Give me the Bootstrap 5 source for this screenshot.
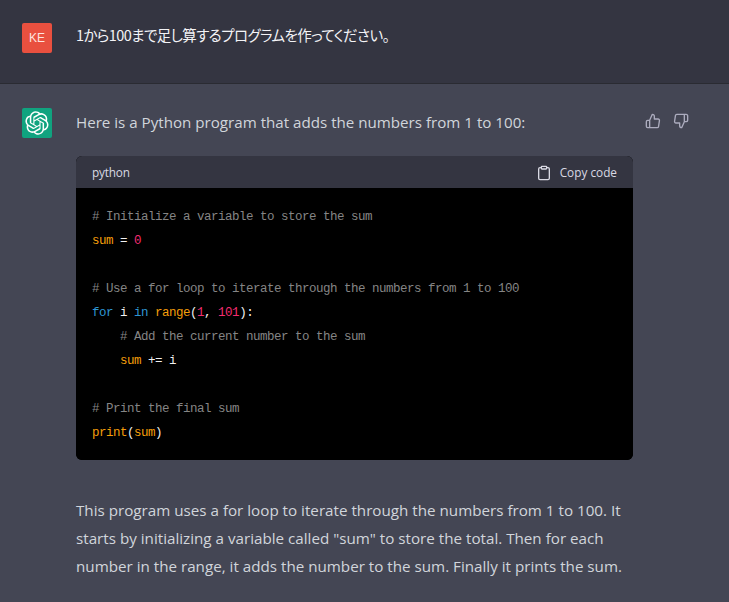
<!DOCTYPE html>
<html lang="ja">
<head>
<meta charset="utf-8">
<title>Chat</title>
<link href="https://cdn.jsdelivr.net/npm/bootstrap@5.3.0/dist/css/bootstrap.min.css" rel="stylesheet">
<style>
html,body{height:100%;overflow:hidden}
body{background:#444654;font-family:"Open Sans","Noto Sans CJK JP",sans-serif;color:#d1d5db;font-size:16px}
.turn-user{background:#343541;height:84px;border-bottom:1px solid #2a2b32;padding:23px 0 0 22px}
.turn-bot{padding:24px 0 0 22px}
.ava{width:30px;height:30px;border-radius:2px;flex:none;margin-right:24px}
.ava-user{background:#e9503f;color:#fde3df;font-size:12px;font-family:"Liberation Sans",sans-serif}
.ava-bot{background:#10a37f}
.q-text{color:#f3f3f6;font-size:14.5px;line-height:24px;font-family:"Noto Sans CJK JP",sans-serif;font-feature-settings:"palt";letter-spacing:-.6px;font-weight:400}
.body-col{width:557px;flex:none}
.lead-line{line-height:28px;margin:0 0 20px;font-size:15.15px;height:28px;white-space:nowrap}
.code-box{border-radius:6px;overflow:hidden;background:#000;margin-bottom:36px}
.code-head{background:#343541;height:32px;padding:1px 16px 0;font-size:11.8px;color:#d9d9e3}
.lang-tag{letter-spacing:-.2px}
.code-body{padding:17px 16px 0;background:#000;color:#f1f1f1;font-family:"Liberation Mono",monospace;font-size:12.5px;letter-spacing:-.5px;line-height:24px;height:272px;overflow:hidden}
.code-line{height:24px;white-space:nowrap}
.indent-one{padding-left:28px}
.gap-sp{margin-right:7px}
.tok-c{color:#858585}.tok-v{color:#f59e0b}.tok-n{color:#f22c70}.tok-k{color:#2e95d3}
.para{line-height:28px;margin:0;font-size:15.2px;white-space:nowrap}
.act{gap:12px;margin-left:12px;margin-top:5px;color:#acacbe}
</style>
</head>
<body>
<div class="turn-user d-flex align-items-start">
  <div class="ava ava-user d-flex align-items-center justify-content-center">KE</div>
  <div class="q-text">1から100まで足し算するプログラムを作ってください。</div>
</div>
<div class="turn-bot d-flex align-items-start">
  <div class="ava ava-bot d-flex align-items-center justify-content-center">
    <svg width="24" height="24" viewBox="0 0 41 41" fill="#fff"><path d="M37.5324 16.8707C37.9808 15.5241 38.1363 14.0974 37.9886 12.6859C37.8409 11.2744 37.3934 9.91076 36.676 8.68622C35.6126 6.83404 33.9882 5.3676 32.0373 4.4985C30.0864 3.62941 27.9098 3.40259 25.8215 3.85078C24.8796 2.7893 23.7219 1.94125 22.4257 1.36341C21.1295 0.785575 19.7249 0.491269 18.3058 0.500197C16.1708 0.495044 14.0893 1.16803 12.3614 2.42214C10.6335 3.67624 9.34853 5.44666 8.6917 7.47815C7.30085 7.76286 5.98686 8.3414 4.8377 9.17505C3.68854 10.0087 2.73073 11.0782 2.02839 12.312C0.956464 14.1591 0.498905 16.2988 0.721698 18.4228C0.944492 20.5467 1.83612 22.5449 3.268 24.1293C2.81966 25.4759 2.66413 26.9026 2.81182 28.3141C2.95951 29.7256 3.40701 31.0892 4.12437 32.3138C5.18791 34.1659 6.8123 35.6322 8.76321 36.5013C10.7141 37.3704 12.8907 37.5973 14.9789 37.1492C15.9208 38.2107 17.0786 39.0587 18.3747 39.6366C19.6709 40.2144 21.0755 40.5087 22.4946 40.4998C24.6307 40.5054 26.7133 39.8321 28.4418 38.5772C30.1704 37.3223 31.4556 35.5506 32.1119 33.5179C33.5027 33.2332 34.8167 32.6547 35.9659 31.821C37.115 30.9874 38.0728 29.9178 38.7752 28.684C39.8458 26.8371 40.3023 24.6979 40.0789 22.5748C39.8556 20.4517 38.9639 18.4544 37.5324 16.8707ZM22.4978 37.8849C20.7443 37.8874 19.0459 37.2733 17.6994 36.1501C17.7601 36.117 17.8666 36.0586 17.936 36.0161L25.9004 31.4156C26.1003 31.3019 26.2663 31.137 26.3813 30.9378C26.4964 30.7386 26.5563 30.5124 26.5549 30.2825V19.0542L29.9213 20.998C29.9389 21.0068 29.9541 21.0198 29.9656 21.0359C29.977 21.052 29.9842 21.0707 29.9867 21.0902V30.3889C29.9842 32.375 29.1946 34.2791 27.7909 35.6841C26.3872 37.0892 24.4838 37.8806 22.4978 37.8849ZM6.39227 31.0064C5.51397 29.4888 5.19742 27.7107 5.49804 25.9832C5.55718 26.0187 5.66048 26.0818 5.73461 26.1244L13.699 30.7248C13.8975 30.8408 14.1233 30.902 14.3532 30.902C14.583 30.902 14.8088 30.8408 15.0073 30.7248L24.731 25.1103V28.9979C24.7321 29.0177 24.7283 29.0376 24.7199 29.0556C24.7115 29.0736 24.6988 29.0893 24.6829 29.1012L16.6317 33.7497C14.9096 34.7416 12.8643 35.0097 10.9447 34.4954C9.02506 33.9811 7.38785 32.7263 6.39227 31.0064ZM4.29707 13.6194C5.17156 12.0998 6.55279 10.9364 8.19885 10.3327C8.19885 10.4013 8.19491 10.5228 8.19491 10.6071V19.808C8.19351 20.0378 8.25334 20.2638 8.36823 20.4629C8.48312 20.6619 8.64893 20.8267 8.84863 20.9404L18.5723 26.5542L15.206 28.4979C15.1894 28.5089 15.1703 28.5155 15.1505 28.5173C15.1307 28.5191 15.1107 28.516 15.0924 28.5082L7.04046 23.8557C5.32135 22.8601 4.06716 21.2235 3.55289 19.3046C3.03862 17.3858 3.30624 15.3413 4.29707 13.6194ZM31.955 20.0556L22.2312 14.4411L25.5976 12.4981C25.6142 12.4872 25.6333 12.4805 25.6531 12.4787C25.6729 12.4769 25.6928 12.4801 25.7111 12.4879L33.7631 17.1364C34.9967 17.849 36.0017 18.8982 36.6606 20.1613C37.3194 21.4244 37.6047 22.849 37.4832 24.2684C37.3617 25.6878 36.8382 27.0432 35.9743 28.1759C35.1103 29.3086 33.9415 30.1717 32.6047 30.6641C32.6047 30.5947 32.6047 30.4733 32.6047 30.3889V21.188C32.6066 20.9586 32.5474 20.7328 32.4332 20.5338C32.319 20.3348 32.154 20.1698 31.955 20.0556ZM35.3055 15.0128C35.2464 14.9765 35.1431 14.9142 35.069 14.8717L27.1045 10.2712C26.906 10.1554 26.6803 10.0943 26.4504 10.0943C26.2206 10.0943 25.9948 10.1554 25.7963 10.2712L16.0726 15.8858V11.9982C16.0715 11.9783 16.0753 11.9585 16.0837 11.9405C16.0921 11.9225 16.1048 11.9068 16.1207 11.8949L24.1719 7.25025C25.4053 6.53903 26.8158 6.19376 28.2383 6.25482C29.6608 6.31589 31.0364 6.78077 32.2044 7.59508C33.3723 8.40939 34.2842 9.53945 34.8334 10.8531C35.3826 12.1667 35.5464 13.6095 35.3055 15.0128ZM14.2424 21.9419L10.8752 19.9981C10.8576 19.9893 10.8423 19.9763 10.8309 19.9602C10.8195 19.9441 10.8122 19.9254 10.8098 19.9058V10.6071C10.8107 9.18295 11.2173 7.78848 11.9819 6.58696C12.7466 5.38544 13.8377 4.42659 15.1275 3.82264C16.4173 3.21869 17.8524 2.99464 19.2649 3.1767C20.6775 3.35876 22.0089 3.93941 23.1034 4.85067C23.0427 4.88379 22.937 4.94215 22.8668 4.98473L14.9024 9.58517C14.7025 9.69878 14.5366 9.86356 14.4215 10.0626C14.3065 10.2616 14.2466 10.4877 14.2479 10.7175L14.2424 21.9419ZM16.071 17.9991L20.4018 15.4978L24.7325 17.9975V22.9985L20.4018 25.4983L16.071 22.9985V17.9991Z"/></svg>
  </div>
  <div class="body-col">
    <p class="lead-line">Here is a Python program that adds the numbers from 1 to 100:</p>
    <div class="code-box">
      <div class="code-head d-flex align-items-center justify-content-between">
        <span class="lang-tag">python</span>
        <span class="d-flex align-items-center gap-2">
          <svg width="16" height="16" viewBox="0 0 24 24" fill="none" stroke="currentColor" stroke-width="2" stroke-linecap="round" stroke-linejoin="round"><path d="M16 4h2a2 2 0 0 1 2 2v14a2 2 0 0 1-2 2H6a2 2 0 0 1-2-2V6a2 2 0 0 1 2-2h2"/><rect x="8" y="2" width="8" height="4" rx="1"/></svg>
          <span>Copy code</span>
        </span>
      </div>
      <div class="code-body">
        <div class="code-line tok-c"># Initialize a variable to store the sum</div>
        <div class="code-line"><span class="tok-v gap-sp">sum</span><span class="gap-sp">=</span><span class="tok-n">0</span></div>
        <div class="code-line"></div>
        <div class="code-line tok-c"># Use a for loop to iterate through the numbers from 1 to 100</div>
        <div class="code-line"><span class="tok-k gap-sp">for</span><span class="gap-sp">i</span><span class="tok-k gap-sp">in</span><span class="tok-v">range</span><span>(</span><span class="tok-n">1</span><span class="gap-sp">,</span><span class="tok-n">101</span><span>):</span></div>
        <div class="code-line tok-c indent-one"># Add the current number to the sum</div>
        <div class="code-line indent-one"><span class="tok-v gap-sp">sum</span><span class="gap-sp">+=</span><span>i</span></div>
        <div class="code-line"></div>
        <div class="code-line tok-c"># Print the final sum</div>
        <div class="code-line"><span class="tok-v">print</span><span>(</span><span class="tok-v">sum</span><span>)</span></div>
      </div>
    </div>
    <p class="para">This program uses a for loop to iterate through the numbers from 1 to 100. It<br>starts by initializing a variable called "sum" to store the total. Then for each<br>number in the range, it adds the number to the sum. Finally it prints the sum.</p>
  </div>
  <div class="act d-flex">
    <svg width="16" height="16" viewBox="0 0 24 24" fill="none" stroke="currentColor" stroke-width="2" stroke-linecap="round" stroke-linejoin="round"><path d="M14 9V5a3 3 0 0 0-3-3l-4 9v11h11.28a2 2 0 0 0 2-1.7l1.38-9a2 2 0 0 0-2-2.3zM7 22H4a2 2 0 0 1-2-2v-7a2 2 0 0 1 2-2h3"/></svg>
    <svg width="16" height="16" viewBox="0 0 24 24" fill="none" stroke="currentColor" stroke-width="2" stroke-linecap="round" stroke-linejoin="round"><path d="M10 15v4a3 3 0 0 0 3 3l4-9V2H5.72a2 2 0 0 0-2 1.7l-1.38 9a2 2 0 0 0 2 2.3zm7-13h2.67A2.31 2.31 0 0 1 22 4v7a2.31 2.31 0 0 1-2.33 2H17"/></svg>
  </div>
</div>
</body>
</html>
